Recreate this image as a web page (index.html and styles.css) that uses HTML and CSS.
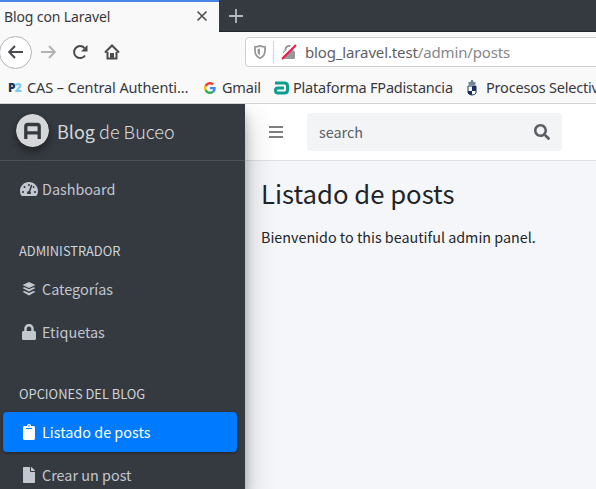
FILE: index.html
```html
<!DOCTYPE html>
<html lang="es">
<head>
<meta charset="utf-8">
<title>Blog con Laravel</title>
<link rel="stylesheet" href="styles.css">
</head>
<body>
<div class="tabs">
  <div class="tab"><span class="t-tab">Blog con Laravel</span>
    <svg class="close" width="12" height="12" viewBox="0 0 12 12"><path d="M1.5 1.5l9 9m0-9l-9 9"/></svg></div>
  <svg class="plus" width="16" height="16" viewBox="0 0 16 16"><path d="M8 1v14M1 8h14"/></svg>
</div>
<div class="toolbar">
  <div class="back"><svg width="16" height="16" viewBox="0 0 16 16"><path d="M15 8H1.500M7 2L1.200 8L7 14"/></svg></div>
  <svg class="nav forward" width="16" height="16" viewBox="0 0 16 16"><path d="M1 8h13.500M9 2l5.800 6L9 14"/></svg>
  <svg class="nav reload" width="16" height="16" viewBox="0 0 16 16"><path d="M13 11.500A6 6 0 1 1 12.500 4"/><path class="solid" d="M15.500 1v6.500H9z"/></svg>
  <svg class="nav home" width="16" height="16" viewBox="0 0 16 16"><path d="M1 8.500L8 1.500l7 7M3.500 8v6.500h9V8"/><path class="solid" d="M6 9h4v5H6z"/></svg>
  <div class="url">
    <svg width="14" height="16" viewBox="0 0 14 16"><path class="shield" d="M7 1.800c2 .8 3.400 1 5 1v4c0 4-2 6-5 7.500c-3-1.500-5-3.500-5-7.500v-4c1.600 0 3-.2 5-1z"/><path class="shieldfill" d="M7 4.500v7C5 10.300 4.500 9 4.500 7V5z"/></svg>
    <i></i>
    <svg width="16" height="16" viewBox="0 0 16 16"><path class="lockarc" d="M4.500 8V5.500a3.500 3.500 0 0 1 7 0V8"/><rect class="lockbody" x="2" y="7" width="12" height="8" rx="1"/><path class="cut" d="M0 13L13 0"/><path class="slash" d="M1 15L15 1"/></svg>
    <span class="t-url">blog_laravel.test<em>/admin/posts</em></span>
  </div>
</div>
<div class="bookmarks">
  <div class="bm b1"><span class="p2">P<b>2</b></span><span class="t-b1">CAS – Central Authenti…</span></div>
  <div class="bm b2"><svg width="12" height="12" viewBox="0 0 48 48"><path fill="#ea4335" d="M24 9.500c3.540 0 6.710 1.220 9.210 3.600l6.850-6.850C35.900 2.380 30.470 0 24 0 14.620 0 6.510 5.380 2.560 13.220l7.980 6.190C12.430 13.720 17.740 9.500 24 9.500z"/><path fill="#4285f4" d="M46.980 24.550c0-1.570-.15-3.090-.38-4.550H24v9.020h12.940c-.58 2.960-2.260 5.480-4.780 7.180l7.730 6c4.510-4.180 7.090-10.360 7.090-17.650z"/><path fill="#fbbc05" d="M10.530 28.590a14.500 14.500 0 0 1 0-9.180l-7.980-6.190a24 24 0 0 0 0 21.560z"/><path fill="#34a853" d="M24 48c6.480 0 11.930-2.130 15.890-5.810l-7.730-6c-2.150 1.450-4.920 2.300-8.160 2.300-6.260 0-11.570-4.220-13.470-9.910l-7.980 6.190C6.510 42.620 14.620 48 24 48z"/></svg><span class="t-b2">Gmail</span></div>
  <div class="bm b3"><svg width="15" height="14" viewBox="0 0 15 14"><path fill="none" stroke="#0b9e8e" stroke-width="3" d="M1 2.100h9.500q3 0 3 3v4q0 3-3 3H4q-2.500 0-2.500-2.500T4 7.100h6"/></svg><span class="t-b3">Plataforma FPadistancia</span></div>
  <div class="bm b4"><svg width="10" height="16" viewBox="0 0 10 16"><path fill="#71869d" d="M4 0h2v1.500l3 1L8 5H2L1 2.500l3-1z"/><path fill="#fff" stroke="#19335c" d="M1 6h8v7q-1 2-4 2t-4-2z"/><path fill="#19335c" d="M5 6h4v5H5zM1 11h4v4q-3 0-4-2z"/></svg><span class="t-b4">Procesos Selectiv</span></div>
</div>
<div class="page">
  <aside>
    <div class="brand"><svg width="33" height="33" viewBox="0 0 33 33"><circle cx="16.500" cy="16.500" r="16.500" fill="#d6d7d9"/><path d="M9.800 25V12.500q0-2 2-2h9.400q2 0 2 2V25M10 18.800h13" fill="none" stroke="#343a40" stroke-width="3.300"/></svg><span class="t-brand">Blog <b>de Buceo</b></span></div>
    <nav>
      <a><svg width="18" height="16" viewBox="0 0 576 512"><path d="M288 32C128.940 32 0 160.940 0 320c0 52.800 14.250 102.260 39.060 144.800 5.610 9.620 16.300 15.200 27.440 15.200h443c11.140 0 21.830-5.580 27.440-15.200C561.750 422.260 576 372.800 576 320c0-159.060-128.940-288-288-288zm0 64c14.710 0 26.580 10.130 30.320 23.650-1.110 2.260-2.640 4.230-3.450 6.670l-9.220 27.670c-5.130 3.490-10.970 6.010-17.640 6.010-17.670 0-32-14.330-32-32S270.330 96 288 96zM96 384c-17.670 0-32-14.330-32-32s14.330-32 32-32 32 14.330 32 32-14.330 32-32 32zm48-160c-17.670 0-32-14.330-32-32s14.330-32 32-32 32 14.330 32 32-14.330 32-32 32zm246.770-72.410l-61.330 184C343.130 347.330 352 364.540 352 384c0 11.720-3.380 22.550-8.880 32H232.880c-5.500-9.450-8.880-20.280-8.880-32 0-33.940 26.500-61.430 59.900-63.590l61.340-184.010c4.170-12.560 17.730-19.450 30.360-15.170 12.570 4.190 19.350 17.790 15.170 30.360zm14.660 57.200l15.520-46.550c3.470-1.290 7.130-2.230 11.050-2.230 17.670 0 32 14.330 32 32s-14.330 32-32 32c-11.380-.01-20.890-6.280-26.570-15.220zM480 384c-17.670 0-32-14.330-32-32s14.330-32 32-32 32 14.330 32 32-14.330 32-32 32z"/></svg><span class="t-n1">Dashboard</span></a>
      <h2><span class="t-h1">ADMINISTRADOR</span></h2>
      <a><svg width="18" height="16" viewBox="0 0 18 16"><path d="M9 1l6.500 3L9 7 2.500 4zM2.500 7l2-.8L9 8.300l4.500-2.100 2 .8L9 10.500zM2.500 10.800l2-.8L9 12.100l4.500-2.100 2 .8L9 14.500z"/></svg><span class="t-n2">Categorías</span></a>
      <a><svg width="18" height="16" viewBox="-64 0 576 512"><path d="M400 224h-24v-72C376 68.200 307.800 0 224 0S72 68.200 72 152v72H48c-26.500 0-48 21.500-48 48v192c0 26.500 21.500 48 48 48h352c26.500 0 48-21.500 48-48V272c0-26.500-21.500-48-48-48zm-104 0H152v-72c0-39.700 32.300-72 72-72s72 32.300 72 72v72z"/></svg><span class="t-n3">Etiquetas</span></a>
      <h2><span class="t-h2">OPCIONES DEL BLOG</span></h2>
      <a class="active"><svg width="18" height="16" viewBox="-96 0 576 512"><path d="M384 112v352c0 26.500-21.500 48-48 48H48c-26.500 0-48-21.500-48-48V112c0-26.500 21.500-48 48-48h80c0-35.300 28.700-64 64-64s64 28.700 64 64h80c26.500 0 48 21.500 48 48zM192 40c-13.300 0-24 10.700-24 24s10.700 24 24 24 24-10.700 24-24-10.700-24-24-24m96 114v-20a6 6 0 0 0-6-6H102a6 6 0 0 0-6 6v20a6 6 0 0 0 6 6h180a6 6 0 0 0 6-6z"/></svg><span class="t-n4">Listado de posts</span></a>
      <a><svg width="18" height="16" viewBox="-96 0 576 512"><path d="M224 136V0H24C10.700 0 0 10.700 0 24v464c0 13.300 10.700 24 24 24h336c13.300 0 24-10.700 24-24V160H248c-13.200 0-24-10.800-24-24zm160-14.100v6.100H256V0h6.100c6.400 0 12.500 2.500 17 7l97.900 98c4.500 4.500 7 10.600 7 16.900z"/></svg><span class="t-n5">Crear un post</span></a>
    </nav>
  </aside>
  <main>
    <header>
      <svg class="bars" width="14" height="14" viewBox="0 0 14 14"><path d="M0 2h14M0 7h14M0 12h14"/></svg>
      <div class="search"><span class="t-search">search</span><svg width="16" height="16" viewBox="0 0 512 512"><path d="M505 442.700L405.300 343c-4.500-4.500-10.600-7-17-7H372c27.600-35.300 44-79.700 44-128C416 93.100 322.900 0 208 0S0 93.100 0 208s93.100 208 208 208c48.300 0 92.700-16.400 128-44v16.300c0 6.400 2.500 12.500 7 17l99.700 99.700c9.400 9.400 24.600 9.400 33.900 0l28.300-28.300c9.400-9.400 9.400-24.600.1-34zM208 336c-70.700 0-128-57.200-128-128 0-70.700 57.200-128 128-128 70.700 0 128 57.200 128 128 0 70.700-57.200 128-128 128z"/></svg></div>
    </header>
    <h1><span class="t-title">Listado de posts</span></h1>
    <p><span class="t-p">Bienvenido to this beautiful admin panel.</span></p>
  </main>
</div>
</body>
</html>
```

FILE: styles.css
```css
* { box-sizing: border-box; }
body { margin: 0; width: 596px; height: 489px; overflow: hidden; display: flex; flex-direction: column; background: #f9f9fa; font-family: "Noto Sans", sans-serif; font-size: 14px; color: #38383d; white-space: nowrap; }
svg { flex: none; display: block; }
.tabs { height: 32px; flex: none; background: #353a40; border-bottom: 1px solid #23272c; display: flex; align-items: center; }
.tab { width: 219px; height: 32px; align-self: flex-start; background: #f9f9fa; border-top: 2px solid #4a86e8; display: flex; align-items: center; justify-content: space-between; padding: 0 11px 2px 4px; }
.close path { fill: none; stroke: #4d4d50; stroke-width: 1.6; }
.plus { margin-left: 9px; }
.plus path { fill: none; stroke: #b8babd; stroke-width: 1.8; }
.toolbar { height: 40px; flex: none; display: flex; align-items: center; }
.back { width: 33px; height: 33px; margin-left: -1px; flex: none; border: 1px solid #b4b4b6; border-radius: 50%; background: #fff; display: flex; align-items: center; justify-content: center; }
.back path, .nav path { fill: none; stroke: #4a4a4f; stroke-width: 2; }
.nav .solid { fill: #4a4a4f; stroke: none; }
.nav.forward { margin-left: 8px; }
.nav.forward path { stroke: #b3b3b5; }
.reload, .home { margin-left: 16px; }
.url { margin-left: 125px; width: 380px; height: 30px; flex: none; border: 1px solid #d0d0d2; border-radius: 4px; background: #fff; display: flex; align-items: center; padding-left: 7px; }
.url i { width: 1px; height: 22px; background: #d4d4d6; margin: 0 7px 0 6px; }
.url em { font-style: normal; color: #87878a; }
.url span { margin-left: 8px; color: #606063; }
.shield { fill: none; stroke: #98989a; stroke-width: 1.8; }
.shieldfill, .lockbody { fill: #98989a; }
.lockarc { fill: none; stroke: #98989a; stroke-width: 2; }
.cut { stroke: #fff; stroke-width: 2; }
.slash { stroke: #f5164e; stroke-width: 2; }
.bookmarks { height: 32px; flex: none; border-bottom: 1px solid #d5d5d7; display: flex; align-items: center; }
.bm { display: flex; align-items: center; flex: none; }
.bm span { padding-bottom: 1px; }
.b1 { width: 196px; padding-left: 8px; gap: 5px; }
.b2 { width: 78px; padding-left: 8px; gap: 6px; }
.b3 { width: 193px; gap: 4px; }
.b4 { gap: 9px; }
.p2 { width: 14px; font: 800 12px "Open Sans", sans-serif; color: #17355f; letter-spacing: -.8px; }
.p2 b { color: #7ccbf2; }
.page { height: 385px; flex: none; display: flex; font-family: "Noto Sans CJK JP", sans-serif; }
aside { width: 245px; flex: none; background: #353940; color: #c2c7d0; box-shadow: 0 14px 28px rgba(0,0,0,.25), 0 10px 10px rgba(0,0,0,.22); z-index: 1; clip-path: inset(0 -50px 0 0); }
.brand { height: 57px; border-bottom: 1px solid #4b5159; display: flex; align-items: center; padding: 0 0 3px 16px; gap: 8px; color: #d6d8da; }
.brand svg { border-radius: 50%; box-shadow: 0 3px 6px rgba(0,0,0,.23), 0 6px 10px rgba(0,0,0,.19); }
.brand b { font-weight: 300; }
nav { padding: 8px 8px 0 3px; }
a { height: 40px; margin-bottom: 3px; border-radius: 4px; display: flex; align-items: center; padding-left: 17px; gap: 4px; }
a svg, .search svg { fill: currentColor; }
a span, .t-search { padding-bottom: 2px; }
a.active { background: #007bff; color: #fff; box-shadow: 0 1px 3px rgba(0,0,0,.4); }
nav h2 { margin: 0; height: 57px; padding: 17px 0 0 16px; line-height: 36px; font-weight: 400; color: #d0d4db; }
main { flex: 1; background: #f4f6f9; color: #212529; }
header { height: 57px; background: #fff; border-bottom: 1px solid #dee2e6; display: flex; align-items: center; padding-left: 24px; }
.bars path { stroke: #7f7f7f; stroke-width: 2; }
.search { margin-left: 24px; width: 255px; height: 38px; border-radius: 4px; background: #f2f4f6; color: #5b5f63; display: flex; align-items: center; justify-content: space-between; padding: 0 12px; }
h1 { margin: 11px 0 0 16px; font-weight: 400; line-height: 40px; height: 40px; }
p { margin: 13px 0 0 16px; line-height: 24px; }
.t-tab { font-size: 14px; letter-spacing: -.12px; }
.t-url { font-size: 15px; letter-spacing: -.14px; }
.bm [class^="t-"] { font-size: 14.500px; letter-spacing: -.2px; }
.bm .t-b1 { letter-spacing: -.12px; }
.t-brand { font-size: 18px; }
a span, .t-search { font-size: 14.400px; }
.t-p { font-size: 14.340px; }
.t-h1, .t-h2 { font-size: 12.850px; }
.t-title { font-size: 25.700px; }
```
